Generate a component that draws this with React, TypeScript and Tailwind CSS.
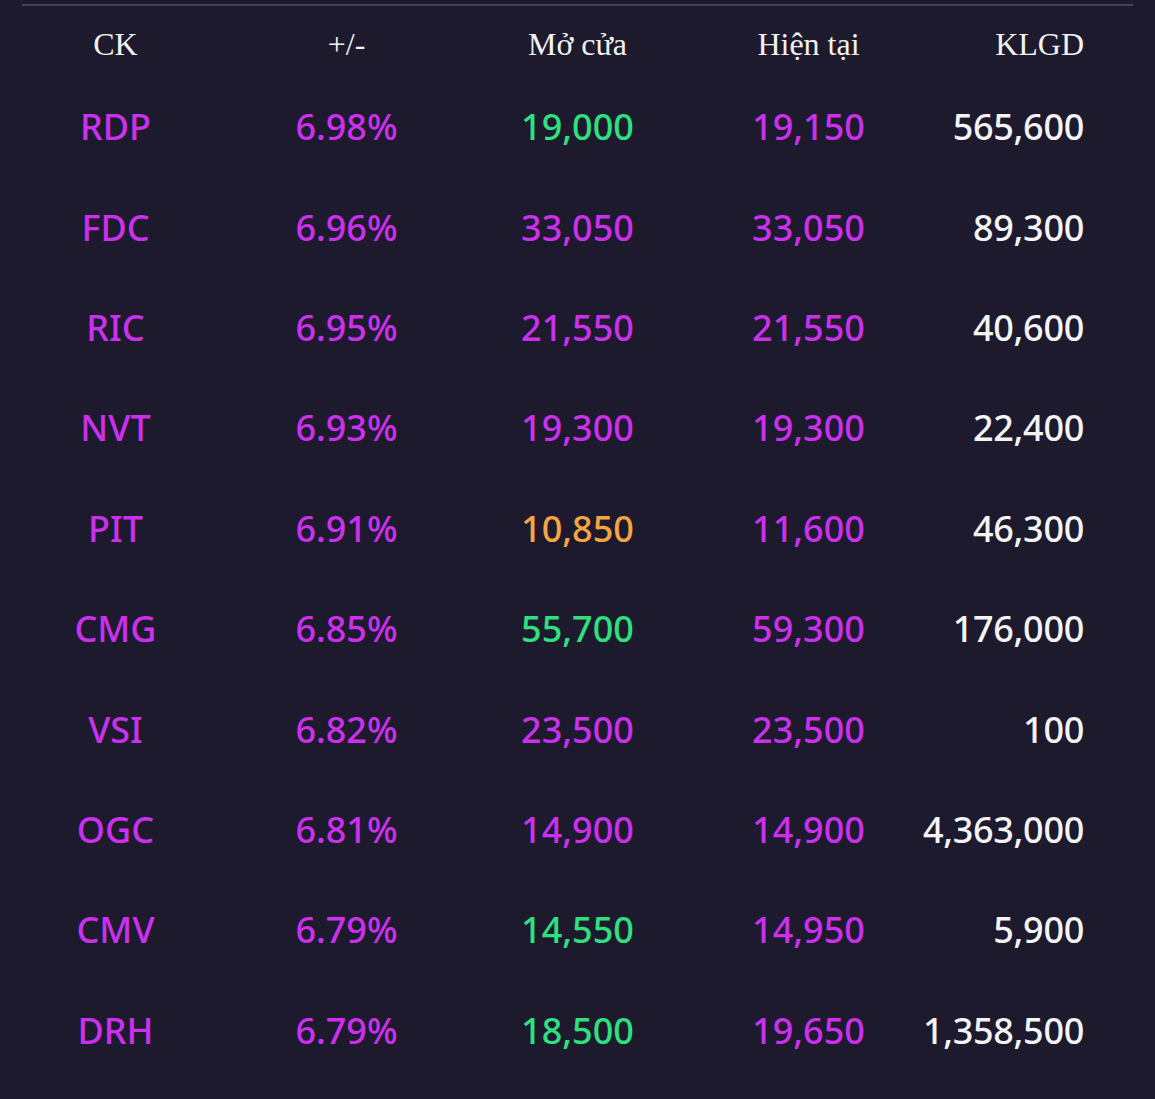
const PURPLE = "text-[#cb30ec]";
const GREEN = "text-[#2ee07f]";
const ORANGE = "text-[#f5a443]";

type Row = {
  ck: string;
  pct: string;
  open: string;
  openColor: string;
  now: string;
  vol: string;
};

const rows: Row[] = [
  { ck: "RDP", pct: "6.98%", open: "19,000", openColor: GREEN, now: "19,150", vol: "565,600" },
  { ck: "FDC", pct: "6.96%", open: "33,050", openColor: PURPLE, now: "33,050", vol: "89,300" },
  { ck: "RIC", pct: "6.95%", open: "21,550", openColor: PURPLE, now: "21,550", vol: "40,600" },
  { ck: "NVT", pct: "6.93%", open: "19,300", openColor: PURPLE, now: "19,300", vol: "22,400" },
  { ck: "PIT", pct: "6.91%", open: "10,850", openColor: ORANGE, now: "11,600", vol: "46,300" },
  { ck: "CMG", pct: "6.85%", open: "55,700", openColor: GREEN, now: "59,300", vol: "176,000" },
  { ck: "VSI", pct: "6.82%", open: "23,500", openColor: PURPLE, now: "23,500", vol: "100" },
  { ck: "OGC", pct: "6.81%", open: "14,900", openColor: PURPLE, now: "14,900", vol: "4,363,000" },
  { ck: "CMV", pct: "6.79%", open: "14,550", openColor: GREEN, now: "14,950", vol: "5,900" },
  { ck: "DRH", pct: "6.79%", open: "18,500", openColor: GREEN, now: "19,650", vol: "1,358,500" },
];

export default function App() {
  return (
    <div className="min-h-[1099px] w-[1155px] bg-[#1d1a2e] pt-[4px]">
      <div className="mx-[22px] h-[2px] bg-[#44425a]" />

      <div className="grid h-[76px] grid-cols-5 items-center font-['Liberation_Serif',serif] text-[32px] text-[#f2f2f2]">
        <div className="text-center">CK</div>
        <div className="text-center">+/-</div>
        <div className="text-center">Mở cửa</div>
        <div className="text-center">Hiện tại</div>
        <div className="pr-[71px] text-right">KLGD</div>
      </div>

      <div className="-mt-[5px] font-['Noto_Sans',sans-serif] text-[36px] font-medium">
        {rows.map((r) => (
          <div key={r.ck} className="grid h-[100.4px] grid-cols-5 items-center">
            <div className={`text-center ${PURPLE}`}>{r.ck}</div>
            <div className={`text-center ${PURPLE}`}>{r.pct}</div>
            <div className={`text-center ${r.openColor}`}>{r.open}</div>
            <div className={`text-center ${PURPLE}`}>{r.now}</div>
            <div className="flex justify-end pr-[71px] text-[#f4f4f4]">
              <span className="whitespace-nowrap tracking-[-0.3px]">{r.vol}</span>
            </div>
          </div>
        ))}
      </div>
    </div>
  );
}
